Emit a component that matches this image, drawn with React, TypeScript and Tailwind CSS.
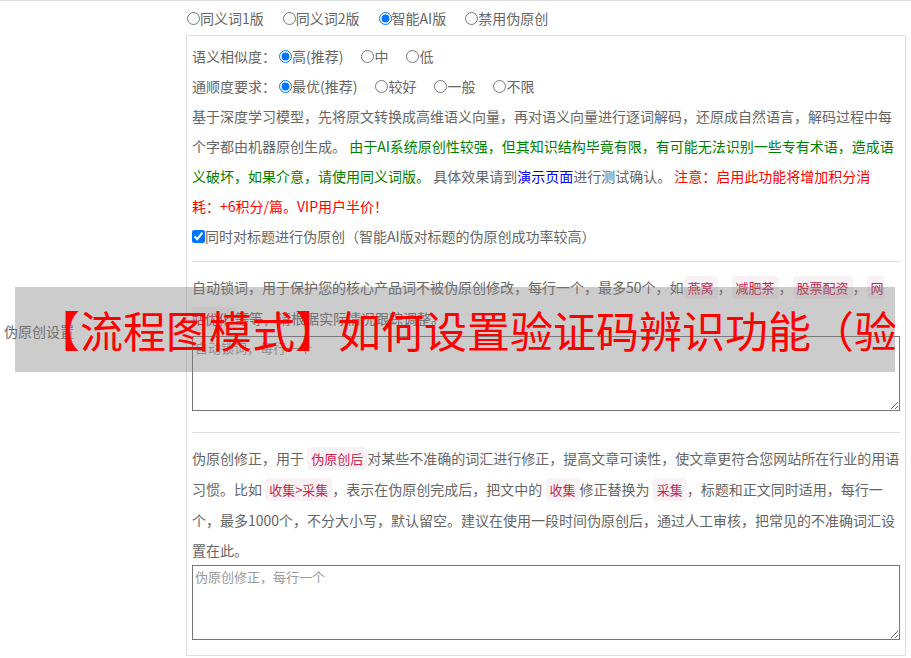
import type { ReactNode } from "react";

function Radio({
  name,
  label,
  checked,
}: {
  name: string;
  label: string;
  checked?: boolean;
}) {
  return (
    <label className="flex items-center">
      <input
        type="radio"
        name={name}
        defaultChecked={checked}
        className="m-0 h-[13px] w-[13px]"
      />
      <span>{label}</span>
    </label>
  );
}

function Code({ children }: { children: ReactNode }) {
  return (
    <code className="rounded-[4px] bg-[#f9f2f4] px-[4px] py-[2px] font-['Noto_Sans_CJK_SC',sans-serif] text-[13px] text-[#c7254e]">
      {children}
    </code>
  );
}

export default function App() {
  return (
    <div className="min-h-screen bg-white font-['Noto_Sans_CJK_SC',sans-serif] text-[#666]">
      <div className="relative flex border-t border-[#ddd]">
        <div className="flex w-[186px] shrink-0 items-center pl-[4px] text-[14px]">
          伪原创设置
        </div>

        <div className="min-w-0 flex-1 pr-[5px] pt-[2px] pb-[6px]">
          <div className="ml-[1px] flex h-[30px] items-center gap-[19px] text-[14px]">
            <Radio name="mode" label="同义词1版" />
            <Radio name="mode" label="同义词2版" />
            <Radio name="mode" label="智能AI版" checked />
            <Radio name="mode" label="禁用伪原创" />
          </div>

          <div className="mt-[2px] border border-[#ddd] px-[5px] pt-[5px] pb-[15px] text-[14px] leading-[30px]">
            <div className="flex items-center">
              <span>语义相似度：</span>
              <div className="ml-[3px] flex items-center gap-[18px]">
                <Radio name="sim" label="高(推荐)" checked />
                <Radio name="sim" label="中" />
                <Radio name="sim" label="低" />
              </div>
            </div>
            <div className="flex items-center">
              <span>通顺度要求：</span>
              <div className="ml-[3px] flex items-center gap-[18px]">
                <Radio name="flu" label="最优(推荐)" checked />
                <Radio name="flu" label="较好" />
                <Radio name="flu" label="一般" />
                <Radio name="flu" label="不限" />
              </div>
            </div>
            <p>
              基于深度学习模型，先将原文转换成高维语义向量，再对语义向量进行逐词解码，还原成自然语言，解码过程中每个字都由机器原创生成。{" "}
              <span className="text-[#008000]">
                由于AI系统原创性较强，但其知识结构毕竟有限，有可能无法识别一些专有术语，造成语义破坏，如果介意，请使用同义词版。
              </span>{" "}
              具体效果请到<span className="text-[#0000ff]">演示页面</span>
              进行测试确认。{" "}
              <span className="text-[#ff0000]">
                注意：启用此功能将增加积分消
                <br />
                耗：+6积分/篇。VIP用户半价！
              </span>
            </p>
            <label className="flex items-center">
              <input
                type="checkbox"
                defaultChecked
                className="m-0 h-[13px] w-[13px]"
              />
              <span>同时对标题进行伪原创（智能AI版对标题的伪原创成功率较高）</span>
            </label>

            <div className="mt-[10px] border-t border-[#ddd] pt-[10px]">
              <p>
                自动锁词，用于保护您的核心产品词不被伪原创修改，每行一个，最多50个，如
                <Code>燕窝</Code>，<Code>减肥茶</Code>，<Code>股票配资</Code>，
                <Code>
                  网<br />
                  站优化
                </Code>
                等等，请根据实际情况跟踪调整。
              </p>
              <textarea
                placeholder="自动锁词，每行一个"
                className="mt-[2px] block h-[75px] w-full border border-[#767676] p-[2px] text-[13px] leading-[18px] placeholder:text-[#999]"
              />
            </div>

            <div className="mt-[21px] border-t border-[#ddd] pt-[10px]">
              <p>
                伪原创修正，用于 <Code>伪原创后</Code>
                对某些不准确的词汇进行修正，提高文章可读性，使文章更符合您网站所在行业的用语习惯。比如{" "}
                <Code>收集&gt;采集</Code>，表示在伪原创完成后，把文中的{" "}
                <Code>收集</Code>修正替换为 <Code>采集</Code>
                ，标题和正文同时适用，每行一个，最多1000个，不分大小写，默认留空。建议在使用一段时间伪原创后，通过人工审核，把常见的不准确词汇设
                <br />
                置在此。
              </p>
              <textarea
                placeholder="伪原创修正，每行一个"
                className="block h-[75px] w-full border border-[#767676] p-[2px] text-[13px] leading-[18px] placeholder:text-[#999]"
              />
            </div>
          </div>
        </div>

        <div className="absolute top-[286px] left-[15px] flex h-[85px] w-[880px] items-center overflow-hidden whitespace-nowrap bg-[rgba(128,128,128,0.4)] pl-[22px] text-[43px] leading-none text-[#ff0000]">
          【流程图模式】如何设置验证码辨识功能（验证码识别）
        </div>
      </div>
    </div>
  );
}
